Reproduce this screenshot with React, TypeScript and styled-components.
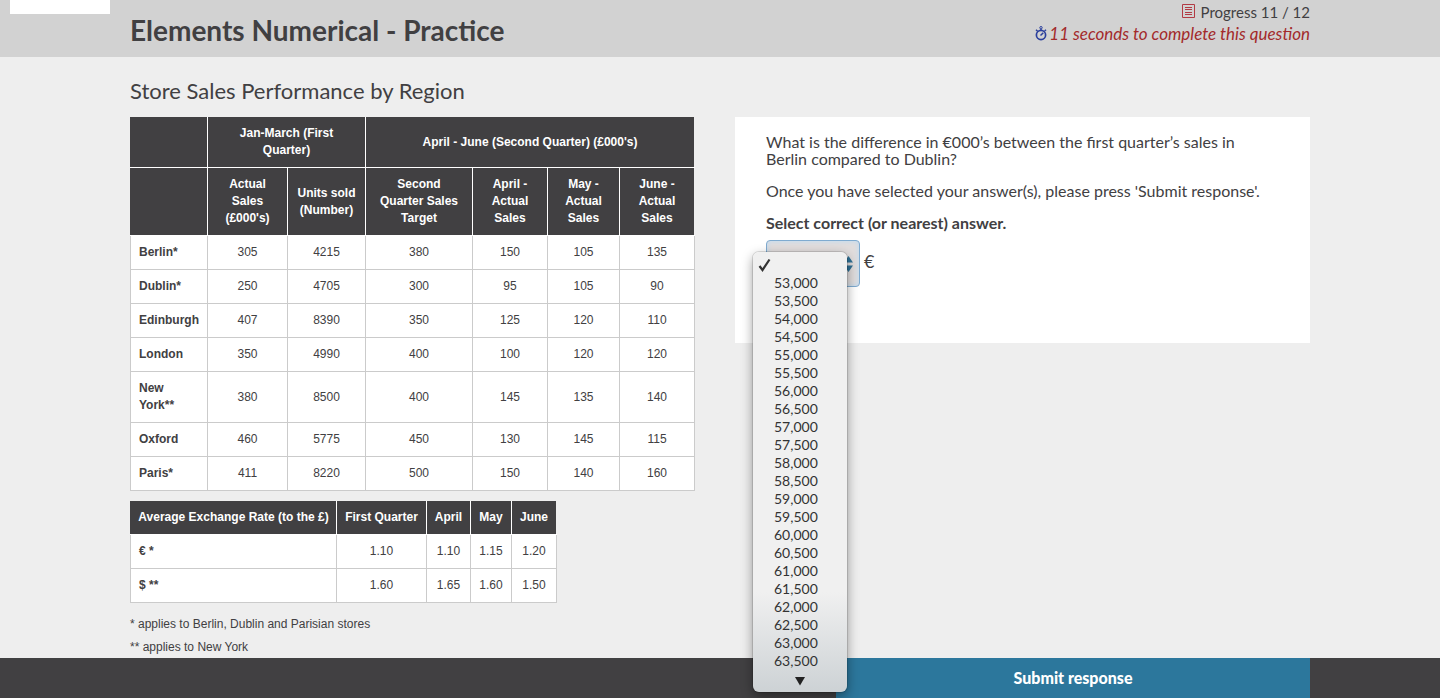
import React from "react";
import styled, { createGlobalStyle } from "styled-components";

const ink = "#414042";
const line = "#cbcbcb";
const sans = `"Proxima Nova", Lato, "Open Sans", sans-serif`;
const arial = `Arial, "Liberation Sans", sans-serif`;

const GlobalStyle = createGlobalStyle`
  *, *::before, *::after { box-sizing: border-box; }
  body { margin: 0; background: #eeeeee; color: ${ink}; font-family: ${sans}; }
`;

const Page = styled.div`
  display: flex;
  flex-direction: column;
  min-height: 100vh;
`;

const Container = styled.div`
  width: 100%;
  max-width: 1220px;
  margin: 0 auto;
  padding: 0 20px;
`;

const Header = styled.header`
  position: relative;
  background: #d2d2d2;
`;

const Brand = styled.div`
  position: absolute;
  top: 0;
  left: 10px;
  width: 100px;
  height: 14px;
  background: #fff;
`;

const HeaderRow = styled(Container)`
  display: flex;
  justify-content: space-between;
  align-items: flex-start;
  padding-bottom: 11px;
`;

const Title = styled.h1`
  margin: 14px 0 0;
  font-size: 28px;
  line-height: 32px;
  font-weight: 700;
`;

const Status = styled.div`
  display: flex;
  flex-direction: column;
  align-items: flex-end;
  padding-top: 1px;
`;

const StatusLine = styled.div<{ $urgent?: boolean }>`
  display: flex;
  align-items: center;
  gap: ${(p) => (p.$urgent ? 2 : 6)}px;
  font-size: ${(p) => (p.$urgent ? 17 : 15)}px;
  line-height: 22px;
  color: ${(p) => (p.$urgent ? "#a32a2b" : ink)};
  font-style: ${(p) => (p.$urgent ? "italic" : "normal")};

  & > svg {
    margin-bottom: 2px;
  }
`;

const Main = styled.main`
  flex: 1;
`;

const Columns = styled(Container)`
  display: grid;
  grid-template-columns: minmax(0, 564fr) minmax(0, 575fr);
  column-gap: 41px;
  align-items: start;
`;

const Heading = styled.h2`
  grid-column: 1 / -1;
  margin: 0;
  padding: 20px 0 12px;
  font-size: 22px;
  line-height: 28px;
  font-weight: 400;
`;

const DataTable = styled.table<{ $width: string }>`
  width: ${(p) => p.$width};
  table-layout: fixed;
  border-collapse: collapse;
  font-family: ${arial};
  font-size: 12px;
  line-height: 17px;
  background: #fff;

  & + & {
    margin-top: 10px;
  }
`;

const Col = styled.col<{ $w: number }>`
  width: ${(p) => p.$w}px;
`;

const HeadCell = styled.th<{ $tight?: boolean }>`
  padding: 8px ${(p) => (p.$tight ? 7 : 9)}px;
  background: ${ink};
  color: #fff;
  font-weight: 700;
  border-right: 1px solid #fff;
  border-bottom: 1px solid #fff;

  &:first-child {
    border-left: 1px solid ${ink};
  }
  &:last-child {
    border-right-color: #eeeeee;
  }
`;

const RowHead = styled.th`
  padding: 8px;
  text-align: left;
  border: 1px solid ${line};
`;

const Cell = styled.td`
  padding: 8px;
  text-align: center;
  border: 1px solid ${line};
`;

const Note = styled.p`
  margin: 0;
  padding-top: 6px;
  font-family: ${arial};
  font-size: 12px;
  line-height: 17px;
`;

const Notes = styled.div`
  padding: 7px 0 2px;
`;

const Panel = styled.section`
  min-height: 226px;
  padding: 16px 35px 0 31px;
  background: #fff;
  font-size: 16px;
  line-height: 17px;
`;

const Text = styled.p`
  margin: 0 0 15px;
`;

const Prompt = styled.label`
  display: block;
  margin-bottom: 9px;
  font-weight: 700;
`;

const Answer = styled.div`
  position: relative;
  display: flex;
  align-items: center;
  gap: 4px;
`;

const Unit = styled.span`
  padding-bottom: 4px;
  font-size: 18px;
`;

const SelectBox = styled.div`
  display: grid;
  width: 94px;
  height: 47px;
  align-items: center;

  & > * {
    grid-area: 1 / 1;
  }
  & > svg {
    justify-self: end;
    margin-right: 7px;
    pointer-events: none;
  }
`;

const Select = styled.select`
  appearance: none;
  width: 100%;
  height: 100%;
  padding: 0 20px 0 10px;
  border: 1px solid #7fabd0;
  border-radius: 4px;
  background: #e1dddd;
  box-shadow: inset 0 0 4px 1px #c6dcef;
  font: inherit;
  outline: none;
`;

const Menu = styled.ul`
  position: absolute;
  z-index: 2;
  top: 12px;
  left: -13px;
  width: 94px;
  margin: 0;
  padding: 4px 0 0;
  list-style: none;
  border-radius: 6px;
  background: linear-gradient(#f0f0f0 0, #f0f0f0 340px, #cdd2d5 100%);
  box-shadow: 0 0 0 1px rgba(0, 0, 0, 0.12), 0 4px 12px rgba(0, 0, 0, 0.4);
  color: #333;
  font-size: 14px;
  line-height: 18px;
`;

const Option = styled.li`
  display: flex;
  align-items: center;
  height: 18px;
  padding-left: 21px;
`;

const CheckedOption = styled(Option)`
  padding-left: 5px;
`;

const More = styled.li`
  display: flex;
  justify-content: center;
  align-items: center;
  height: 22px;
`;

const Footer = styled.footer`
  background: ${ink};
`;

const FooterRow = styled(Container)`
  display: flex;
  justify-content: flex-end;
`;

const Submit = styled.button`
  width: 474px;
  height: 40px;
  padding: 0;
  border: 0;
  background: #2c779c;
  color: #fff;
  font-family: inherit;
  font-size: 16px;
  line-height: 20px;
  font-weight: 900;
`;

const salesCols = [77, 80, 78, 107, 75, 72, 75];
const sales: [string, number[]][] = [
  ["Berlin*", [305, 4215, 380, 150, 105, 135]],
  ["Dublin*", [250, 4705, 300, 95, 105, 90]],
  ["Edinburgh", [407, 8390, 350, 125, 120, 110]],
  ["London", [350, 4990, 400, 100, 120, 120]],
  ["New York**", [380, 8500, 400, 145, 135, 140]],
  ["Oxford", [460, 5775, 450, 130, 145, 115]],
  ["Paris*", [411, 8220, 500, 150, 140, 160]],
];
const subHeads = [
  "Actual Sales (£000's)",
  "Units sold (Number)",
  "Second Quarter Sales Target",
  "April - Actual Sales",
  "May - Actual Sales",
  "June - Actual Sales",
];

const rateCols = [206, 90, 44, 41, 45];
const rateHeads = ["Average Exchange Rate (to the £)", "First Quarter", "April", "May", "June"];
const rates: [string, string[]][] = [
  ["€ *", ["1.10", "1.10", "1.15", "1.20"]],
  ["$ **", ["1.60", "1.65", "1.60", "1.50"]],
];

const options = Array.from({ length: 22 }, (_, i) => (53000 + i * 500).toLocaleString("en-US"));

const ListIcon = () => (
  <svg width="13" height="15" viewBox="0 0 13 15" fill="none" stroke="#b23a44" aria-hidden="true">
    <path d="M.5.5h12v13H.5zM3 3.5h7M3 5.500h7M3 8.500h7M3 10.500h7" />
  </svg>
);

const StopwatchIcon = () => (
  <svg width="12" height="15" viewBox="0 0 12 15" fill="none" stroke="#2a3f9d" aria-hidden="true">
    <circle cx="6" cy="9" r="4.6" strokeWidth="1.7" />
    <circle cx="6" cy="1.7" r="1.2" />
    <path d="M6 3v1.5M1 3.700l1.600 1.500M11 3.700L9.600 5.100" strokeWidth="1.4" />
    <path d="M5.500 9.500L8.300 6.700" strokeWidth="1.5" />
  </svg>
);

const Arrows = () => (
  <svg width="9" height="16" viewBox="0 0 9 16" fill="#2f7095" aria-hidden="true">
    <path d="M0 6.500L4.500 0 9 6.500zM0 9.500h9L4.500 16z" />
  </svg>
);

const Tick = () => (
  <svg width="13" height="14" viewBox="0 0 13 14" fill="none" stroke="#333" strokeWidth="2.2" aria-hidden="true">
    <path d="M1.500 8l3 4L11.500 1.500" />
  </svg>
);

const DownArrow = () => (
  <svg width="10" height="9" viewBox="0 0 10 9" fill="#222" aria-hidden="true">
    <path d="M0 0h10L5 8.500z" />
  </svg>
);

export default function App() {
  return (
    <Page>
      <GlobalStyle />
      <Header>
        <Brand />
        <HeaderRow>
          <Title>Elements Numerical - Practice</Title>
          <Status>
            <StatusLine>
              <ListIcon />
              Progress 11 / 12
            </StatusLine>
            <StatusLine $urgent>
              <StopwatchIcon />
              11 seconds to complete this question
            </StatusLine>
          </Status>
        </HeaderRow>
      </Header>

      <Main>
        <Columns>
          <Heading>Store Sales Performance by Region</Heading>
          <div>
            <DataTable $width="100%">
              <colgroup>
                {salesCols.map((w, i) => (
                  <Col key={i} $w={w} />
                ))}
              </colgroup>
              <thead>
                <tr>
                  <HeadCell />
                  <HeadCell colSpan={2}>Jan-March (First Quarter)</HeadCell>
                  <HeadCell colSpan={4}>April - June (Second Quarter) (£000's)</HeadCell>
                </tr>
                <tr>
                  <HeadCell />
                  {subHeads.map((h) => (
                    <HeadCell key={h}>{h}</HeadCell>
                  ))}
                </tr>
              </thead>
              <tbody>
                {sales.map(([city, values]) => (
                  <tr key={city}>
                    <RowHead scope="row">{city}</RowHead>
                    {values.map((v, i) => (
                      <Cell key={i}>{v}</Cell>
                    ))}
                  </tr>
                ))}
              </tbody>
            </DataTable>
            <DataTable $width="426px">
              <colgroup>
                {rateCols.map((w, i) => (
                  <Col key={i} $w={w} />
                ))}
              </colgroup>
              <thead>
                <tr>
                  {rateHeads.map((h) => (
                    <HeadCell key={h} $tight>
                      {h}
                    </HeadCell>
                  ))}
                </tr>
              </thead>
              <tbody>
                {rates.map(([name, values]) => (
                  <tr key={name}>
                    <RowHead scope="row">{name}</RowHead>
                    {values.map((v, i) => (
                      <Cell key={i}>{v}</Cell>
                    ))}
                  </tr>
                ))}
              </tbody>
            </DataTable>
            <Notes>
              <Note>* applies to Berlin, Dublin and Parisian stores</Note>
              <Note>** applies to New York</Note>
            </Notes>
          </div>

          <Panel>
            <Text>
              What is the difference in €000’s between the first quarter’s sales in Berlin compared to Dublin?
            </Text>
            <Text>Once you have selected your answer(s), please press 'Submit response'.</Text>
            <Prompt htmlFor="answer">Select correct (or nearest) answer.</Prompt>
            <Answer>
              <SelectBox>
                <Select id="answer" defaultValue="">
                  <option value="" />
                  {options.map((o) => (
                    <option key={o}>{o}</option>
                  ))}
                </Select>
                <Arrows />
              </SelectBox>
              <Unit>€</Unit>
              <Menu role="listbox" aria-label="Answer">
                <CheckedOption role="option" aria-selected="true">
                  <Tick />
                </CheckedOption>
                {options.map((o) => (
                  <Option key={o} role="option" aria-selected="false">
                    {o}
                  </Option>
                ))}
                <More aria-hidden="true">
                  <DownArrow />
                </More>
              </Menu>
            </Answer>
          </Panel>
        </Columns>
      </Main>

      <Footer>
        <FooterRow>
          <Submit type="button">Submit response</Submit>
        </FooterRow>
      </Footer>
    </Page>
  );
}
